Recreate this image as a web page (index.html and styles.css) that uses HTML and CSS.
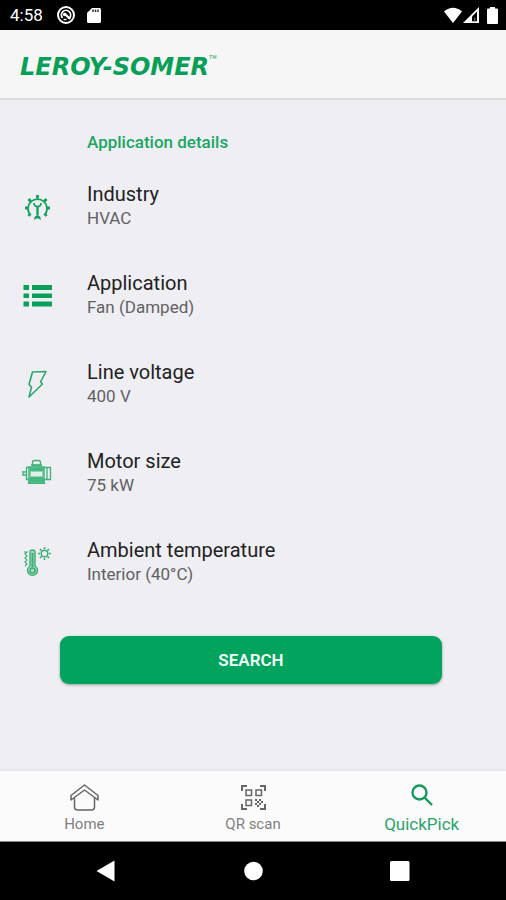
FILE: index.html
```html
<!DOCTYPE html>
<html lang="en">
<head>
    <meta charset="UTF-8">
    <meta name="viewport" content="width=device-width, initial-scale=1.0">
    <title>Leroy-Somer QuickPick</title>
    <link rel="stylesheet" href="styles.css">
</head>
<body>
    <div class="status-bar">
        <span class="clock">4:58</span>
        <svg class="status-icon" width="20" height="20" viewBox="0 0 20 20">
            <circle cx="10" cy="10" r="8" fill="none" stroke="#fff" stroke-width="2"/>
            <path d="M6.500 13A4.600 4.600 0 1 1 13.500 13" fill="none" stroke="#fff" stroke-width="1.800"/>
            <path d="M8.500 8.500l5.500 5.500" stroke="#fff" stroke-width="2.400"/>
            <circle cx="8.600" cy="9.500" r="1.800" fill="#fff"/>
            <path d="M7.500 14.500h3" stroke="#fff" stroke-width="1.400"/>
        </svg>
        <svg class="status-icon" width="14" height="17" viewBox="0 0 14 17">
            <path d="M5 1h7.500q1.500 0 1.500 1.500v12q0 1.500-1.500 1.500h-11q-1.500 0-1.500-1.500V6z" fill="#fff"/>
            <path d="M6 2.500v2.500M8.500 2.500v2.500M11 2.500v2.500" stroke="#333" stroke-width="1.500"/>
        </svg>
        <div class="status-right">
            <svg width="20" height="16" viewBox="0 0 20 16">
                <path d="M1 4.500Q10-3 19 4.500L10 16z" fill="#fff"/>
            </svg>
            <svg width="16" height="16" viewBox="0 0 16 16">
                <path d="M0 16L16 0v16z" fill="#fff"/>
                <path d="M9 9.500L14 4.500v9.800H9z" fill="#000"/>
                <path d="M11 10.500h1.500v3.800H11z" fill="#555"/>
            </svg>
            <svg class="battery" width="11" height="17" viewBox="0 0 11 17">
                <path d="M3 0h5v1.500h2q1 0 1 1v13.500q0 1-1 1H1q-1 0-1-1V2.500q0-1 1-1h2z" fill="#fff"/>
            </svg>
        </div>
    </div>

    <header class="app-header">
        <h1 class="logo">LEROY-SOMER<span class="tm">TM</span></h1>
    </header>

    <main class="content">
        <h2 class="section-title">Application details</h2>

        <ul class="details">
            <li class="detail">
                <svg class="icon" width="30" height="30" viewBox="0 0 30 30" fill="none" stroke="#12a15e">
                    <path d="M8 23.500A9.500 9.500 0 1 1 23 23.500" stroke-width="1.800"/>
                    <path d="M15.500 7.500V4M8.800 10.500L6.500 8M22.200 10.500L24.500 8M6 17H3M25 17h3M8.500 22.500L6.500 25M22.500 22.500l2 2.500" stroke-width="2.800"/>
                    <path d="M12 12q0 3.500 3.500 3.500T19 12" stroke-width="1.700"/>
                    <path d="M15.500 15.500V24" stroke-width="2.400"/>
                    <path d="M12.500 28.500q0-4 3-4t3 4q-1.500-1.500-3-1.500t-3 1.500z" fill="#12a15e" stroke-width=".6"/>
                </svg>
                <div>
                    <h3>Industry</h3>
                    <p>HVAC</p>
                </div>
            </li>
            <li class="detail">
                <svg class="icon" width="30" height="30" viewBox="0 0 30 30" fill="#08a05a">
                    <path d="M1.500 5H7v5H1.500zM10 5h20v5H10zM1.500 13.500H7v4.500H1.500zM10 13.500h20v4.500H10zM1.500 21.500H7v5H1.500zM10 21.500h20v5H10z"/>
                </svg>
                <div>
                    <h3>Application</h3>
                    <p>Fan (Damped)</p>
                </div>
            </li>
            <li class="detail">
                <svg class="icon" width="30" height="30" viewBox="0 0 30 30" fill="none" stroke="#2aa86c" stroke-width="1.600" stroke-linejoin="round">
                    <path d="M10.500 3L24 2.500L18.500 13L20.500 15L7 28L9.500 18L7 15.500z"/>
                </svg>
                <div>
                    <h3>Line voltage</h3>
                    <p>400 V</p>
                </div>
            </li>
            <li class="detail">
                <svg class="icon" width="30" height="30" viewBox="0 0 30 30" fill="none" stroke="#3cb37a">
                    <path d="M10.500 7.500V4.500q0-2 2-2h4q2 0 2 2v3z" stroke-width="1.400"/>
                    <path d="M9 7h11" stroke-width="1.500"/>
                    <path d="M7 9h15v14H7z" fill="#8fd3b1" stroke-width="1.400"/>
                    <path d="M8 11.500h13M8 20.500h13" stroke-width="2.400"/>
                    <path d="M9 14h11v4H9z" fill="#e1f1e9" stroke="none"/>
                    <path d="M22 9.500h6.500v12H22M7 9.500H4.500v12H7M25 10v11M4.500 14H1v3h3.500M1 13v5" stroke-width="1.300"/>
                    <path d="M7 23l-1 2.500h17L22 23z" fill="#56bb8a" stroke-width="1"/>
                </svg>
                <div>
                    <h3>Motor size</h3>
                    <p>75 kW</p>
                </div>
            </li>
            <li class="detail">
                <svg class="icon" width="30" height="30" viewBox="0 0 30 30" fill="none" stroke="#3cae76">
                    <path d="M8 19V5.500Q8 3 10.500 3T13 5.500V19a5 5 0 1 1-5 0z" fill="#a9dcc2" stroke-width="1.400"/>
                    <path d="M10.500 6v14" stroke-width="2"/>
                    <circle cx="10.500" cy="23.500" r="2.500" stroke-width="1.500"/>
                    <path d="M2 5h3l-2 2 2 2-2 2 2 2-2 2 2 2-2 2" stroke-width="1.200"/>
                    <circle cx="22.500" cy="6.500" r="3.300" stroke-width="1.500"/>
                    <path d="M22.500 0v2M22.500 11v2M16 6.500h2M27 6.500h2M18 2l1.400 1.400M25.600 9.600L27 11M27 2l-1.400 1.400M19.400 9.600L18 11" stroke-width="1.600"/>
                </svg>
                <div>
                    <h3>Ambient temperature</h3>
                    <p>Interior (40°C)</p>
                </div>
            </li>
        </ul>

        <button type="button" class="search-btn">SEARCH</button>
    </main>

    <nav class="tabs">
        <a href="#" class="tab">
            <svg width="30" height="30" viewBox="0 0 30 30" fill="none" stroke="#666" stroke-width="1.500" stroke-linejoin="round">
                <path d="M15.500 3L2 13.500v4.500L15.500 8 29 18v-4.500z"/>
                <path d="M5.500 16v9q0 3 3 3h14q3 0 3-3v-9"/>
            </svg>
            <span>Home</span>
        </a>
        <a href="#" class="tab">
            <svg width="30" height="30" viewBox="0 0 30 30" fill="none" stroke="#666" stroke-width="1.500">
                <path d="M4 9V4h5M22 4h5v5M4 22v5h5M22 27h5v-5" stroke-width="2"/>
                <path d="M8 8h5.500v5.500H8zM18 8h5.500v5.500H18zM8 18h5.500v5.500H8z"/>
                <path d="M17 17h2v2h-2zM21 17h2v2h-2zM19 19h2v2h-2zM23 19h2v2h-2zM17 21h2v2h-2zM21 21h2v2h-2zM19 23h2v2h-2z" fill="#666" stroke="none"/>
            </svg>
            <span>QR scan</span>
        </a>
        <a href="#" class="tab active">
            <svg width="30" height="30" viewBox="0 0 30 30" fill="none" stroke="#159a5b" stroke-width="2.400">
                <circle cx="12.500" cy="10.500" r="7"/>
                <path d="M17.500 15.500l7.500 7.500"/>
            </svg>
            <span>QuickPick</span>
        </a>
    </nav>

    <div class="system-nav">
        <button type="button" aria-label="Back">
            <svg width="20" height="22" viewBox="0 0 20 22"><path d="M0.500 11L18.500 0.500v21z" fill="#fff"/></svg>
        </button>
        <button type="button" aria-label="Home screen">
            <svg width="20" height="20" viewBox="0 0 20 20"><circle cx="10.500" cy="10" r="9.300" fill="#fff"/></svg>
        </button>
        <button type="button" aria-label="Recent apps">
            <svg width="20" height="20" viewBox="0 0 20 20"><rect width="19.500" height="20" rx="1.500" fill="#fff"/></svg>
        </button>
    </div>
</body>
</html>
```
FILE: styles.css
```css
* {
    margin: 0;
    padding: 0;
    box-sizing: border-box;
}

body {
    font-family: Roboto, "Liberation Sans", sans-serif;
    background: #efeef3;
    color: #222;
    display: flex;
    flex-direction: column;
    min-height: 100vh;
}

svg {
    display: block;
}

/* Android status bar */
.status-bar {
    display: flex;
    align-items: center;
    height: 30px;
    padding: 0 8px 0 10px;
    background: #000;
    color: #fff;
}

.clock {
    font-size: 17px;
    font-weight: 400;
    line-height: 30px;
    margin-right: 13px;
}

.status-icon {
    margin-right: 11px;
}

.status-right {
    display: flex;
    align-items: center;
    margin-left: auto;
}

.battery {
    margin-left: 8px;
}

.app-header {
    display: flex;
    align-items: center;
    height: 70px;
    padding: 6px 20px 0;
    background: #f6f6f6;
    border-bottom: 2px solid #dcdcdf;
}

.logo {
    display: flex;
    align-items: flex-start;
    font-family: "DejaVu Sans", sans-serif;
    font-size: 24px;
    font-weight: bold;
    font-style: italic;
    line-height: 24px;
    color: #0a9f58;
}

.tm {
    font-size: 5px;
    font-weight: normal;
    line-height: 5px;
}

.content {
    flex: 1;
    display: flex;
    flex-direction: column;
    padding-top: 30px;
}

.section-title {
    margin: 0 20px 7px 87px;
    font-size: 17px;
    font-weight: 500;
    line-height: 24px;
    color: #1ba663;
}

.details {
    list-style: none;
}

.detail {
    display: flex;
    align-items: center;
    padding: 20px 22px;
}

.icon {
    flex: none;
    margin-right: 35px;
}

.detail h3 {
    font-size: 20px;
    font-weight: 400;
    line-height: 26px;
}

.detail p {
    font-size: 17px;
    line-height: 23px;
    color: #616164;
}

.search-btn {
    height: 48px;
    margin: 30px 64px 30px 60px;
    border: none;
    border-radius: 9px;
    background: #02a45d;
    color: #f2fff8;
    font-family: inherit;
    font-size: 17px;
    font-weight: 600;
    box-shadow: 0 1px 3px rgba(0, 0, 0, 0.35);
    cursor: pointer;
}

/* Bottom tabs */
.tabs {
    display: flex;
    height: 71px;
    background: #fbfbfb;
    border-bottom: 1px solid #888;
    box-shadow: 0 -1px 3px rgba(0, 0, 0, 0.06);
}

.tab {
    flex: 1;
    display: flex;
    flex-direction: column;
    align-items: center;
    padding-top: 11px;
    font-size: 15px;
    line-height: 24px;
    color: #808080;
    text-decoration: none;
}

.tab.active {
    font-size: 17px;
    color: #2ba46b;
}

/* Android navigation bar */
.system-nav {
    display: flex;
    justify-content: center;
    height: 58px;
    background: #000;
}

.system-nav button {
    display: flex;
    align-items: center;
    justify-content: center;
    width: 29%;
    border: none;
    background: none;
}
```
